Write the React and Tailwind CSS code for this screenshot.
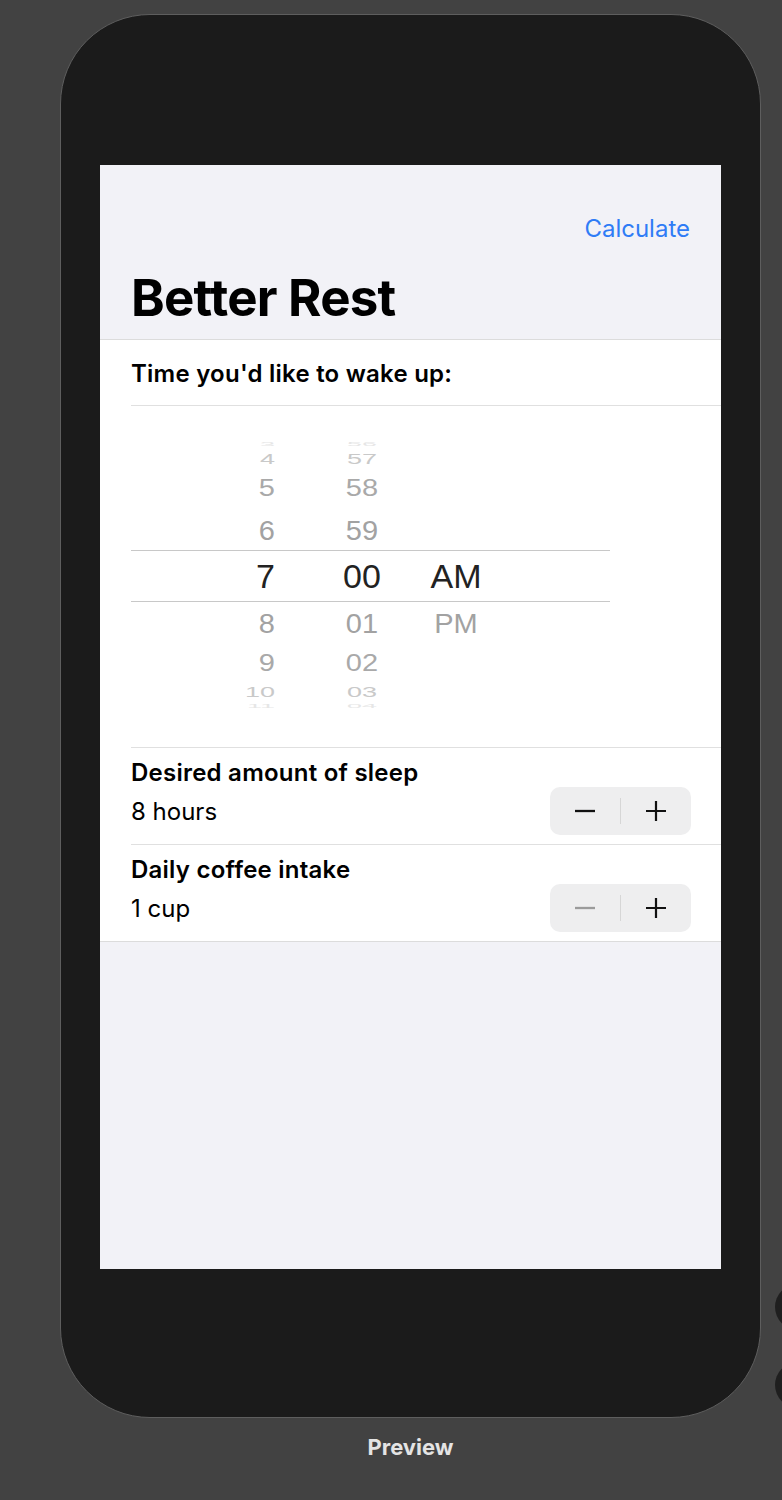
import React from 'react';

// ── Wheel picker rows (hour / minute / period) ───────────────
const wheelRows = [
  { h: 'h-[16px]', hr: '3', mn: '56', ap: '', cls: 'text-[27px] scale-y-[0.2] text-[#e6e6e6]' },
  { h: 'h-[14px]', hr: '4', mn: '57', ap: '', cls: 'text-[27px] scale-y-[0.55] text-[#c9c9c9]' },
  { h: 'h-[44px]', hr: '5', mn: '58', ap: '', cls: 'text-[29px] scale-y-[0.84] text-[#a9a9a9]' },
  { h: 'h-[40px]', hr: '6', mn: '59', ap: '', cls: 'text-[29px] scale-y-[0.97] text-[#a2a2a2]' },
  { h: 'h-[52px]', hr: '7', mn: '00', ap: 'AM', cls: 'text-[34px] text-[#222]', selected: true },
  { h: 'h-[42px]', hr: '8', mn: '01', ap: 'PM', cls: 'text-[29px] scale-y-[0.95] text-[#a2a2a2]' },
  { h: 'h-[38px]', hr: '9', mn: '02', ap: '', cls: 'text-[29px] scale-y-[0.8] text-[#a9a9a9]' },
  { h: 'h-[20px]', hr: '10', mn: '03', ap: '', cls: 'text-[27px] scale-y-[0.55] text-[#c9c9c9]' },
  { h: 'h-[8px]', hr: '11', mn: '04', ap: '', cls: 'text-[27px] scale-y-[0.2] text-[#e6e6e6]' },
];

function Minus({ disabled }) {
  return (
    <svg width="22" height="22" viewBox="0 0 22 22">
      <path d="M1 11h20" stroke={disabled ? '#9b9b9b' : '#111'} strokeWidth="2.3" />
    </svg>
  );
}

function Plus() {
  return (
    <svg width="22" height="22" viewBox="0 0 22 22">
      <path d="M1 11h20M11 1v20" stroke="#111" strokeWidth="2.2" />
    </svg>
  );
}

function Stepper({ minusDisabled }) {
  return (
    <div className="w-[141px] h-[48px] rounded-[10px] bg-[#eeeeef] flex items-center">
      <div className="w-[70px] flex justify-center">
        <Minus disabled={minusDisabled} />
      </div>
      <div className="w-px h-[26px] bg-[#d6d6d6]" />
      <div className="w-[70px] flex justify-center">
        <Plus />
      </div>
    </div>
  );
}

function StepperRow({ label, value, minusDisabled, last }) {
  return (
    <div
      className={`ml-[31px] pr-[30px] pt-[11px] flex justify-between ${
        last ? 'h-[96px]' : 'h-[97px] border-b border-[#e0e0e0]'
      }`}
    >
      <div>
        <div className="text-[24px] leading-[28px] font-semibold tracking-[0.01em] text-black">{label}</div>
        <div className="mt-[11px] text-[24px] leading-[28px] text-black">{value}</div>
      </div>
      <div className="mt-[28px]">
        <Stepper minusDisabled={minusDisabled} />
      </div>
    </div>
  );
}

export default function App() {
  return (
    <div className="relative w-[782px] h-[1500px] bg-[#424242] overflow-hidden font-['Inter',sans-serif]">
      <div className="ml-[60px] w-[701px]">
        {/* device frame */}
        <div className="mt-[14px] h-[1404px] rounded-[90px] border-[1.5px] border-[#5e5e5e] bg-[#1b1b1b] pt-[150px] pl-[39px]">
          <div className="w-[621px] h-[1104px] bg-[#f2f2f7] flex flex-col">
            {/* nav header */}
            <div className="h-[175px] border-b border-[#dcdcdc] pl-[31px] pr-[31px]">
              <div className="pt-[50px] flex justify-end">
                <span className="text-[24px] leading-[28px] text-[#2f7cf6]">Calculate</span>
              </div>
              <div className="mt-[25px] text-[51px] leading-[60px] font-bold tracking-[-0.015em] text-black">
                Better Rest
              </div>
            </div>

            {/* form list */}
            <div className="bg-white border-b border-[#dcdcdc]">
              <div className="ml-[31px] h-[66px] pt-[2px] border-b border-[#e0e0e0] flex items-center">
                <span className="text-[24px] font-semibold tracking-[0.01em] text-black">Time you'd like to wake up:</span>
              </div>

              <div className="ml-[31px] h-[342px] pt-[30px] border-b border-[#e0e0e0]">
                <div className="w-[479px] font-['Liberation_Sans',sans-serif]">
                  {wheelRows.map((r) => (
                    <div
                      key={r.hr}
                      className={`${r.h} flex items-center ${
                        r.selected ? 'border-y border-[#c8c8c8]' : ''
                      }`}
                    >
                      <div className={`w-[144px] text-right leading-none ${r.cls}`}>{r.hr}</div>
                      <div className={`ml-[47px] w-[80px] text-center leading-none ${r.cls}`}>{r.mn}</div>
                      <div className={`ml-[14px] w-[80px] text-center leading-none ${r.cls}`}>{r.ap}</div>
                    </div>
                  ))}
                </div>
              </div>

              <StepperRow label="Desired amount of sleep" value="8 hours" />
              <StepperRow label="Daily coffee intake" value="1 cup" minusDisabled last />
            </div>
          </div>
        </div>

        <div className="mt-[15px] text-center text-[22px] leading-[28px] font-bold text-[#e4e4e4]">
          Preview
        </div>
      </div>

      {/* side controls, clipped at the canvas edge */}
      <div className="absolute left-[775px] top-[1284px] w-[48px] h-[46px] rounded-full bg-[#1f1f1f]" />
      <div className="absolute left-[775px] top-[1362px] w-[48px] h-[46px] rounded-full bg-[#1f1f1f]" />
    </div>
  );
}
